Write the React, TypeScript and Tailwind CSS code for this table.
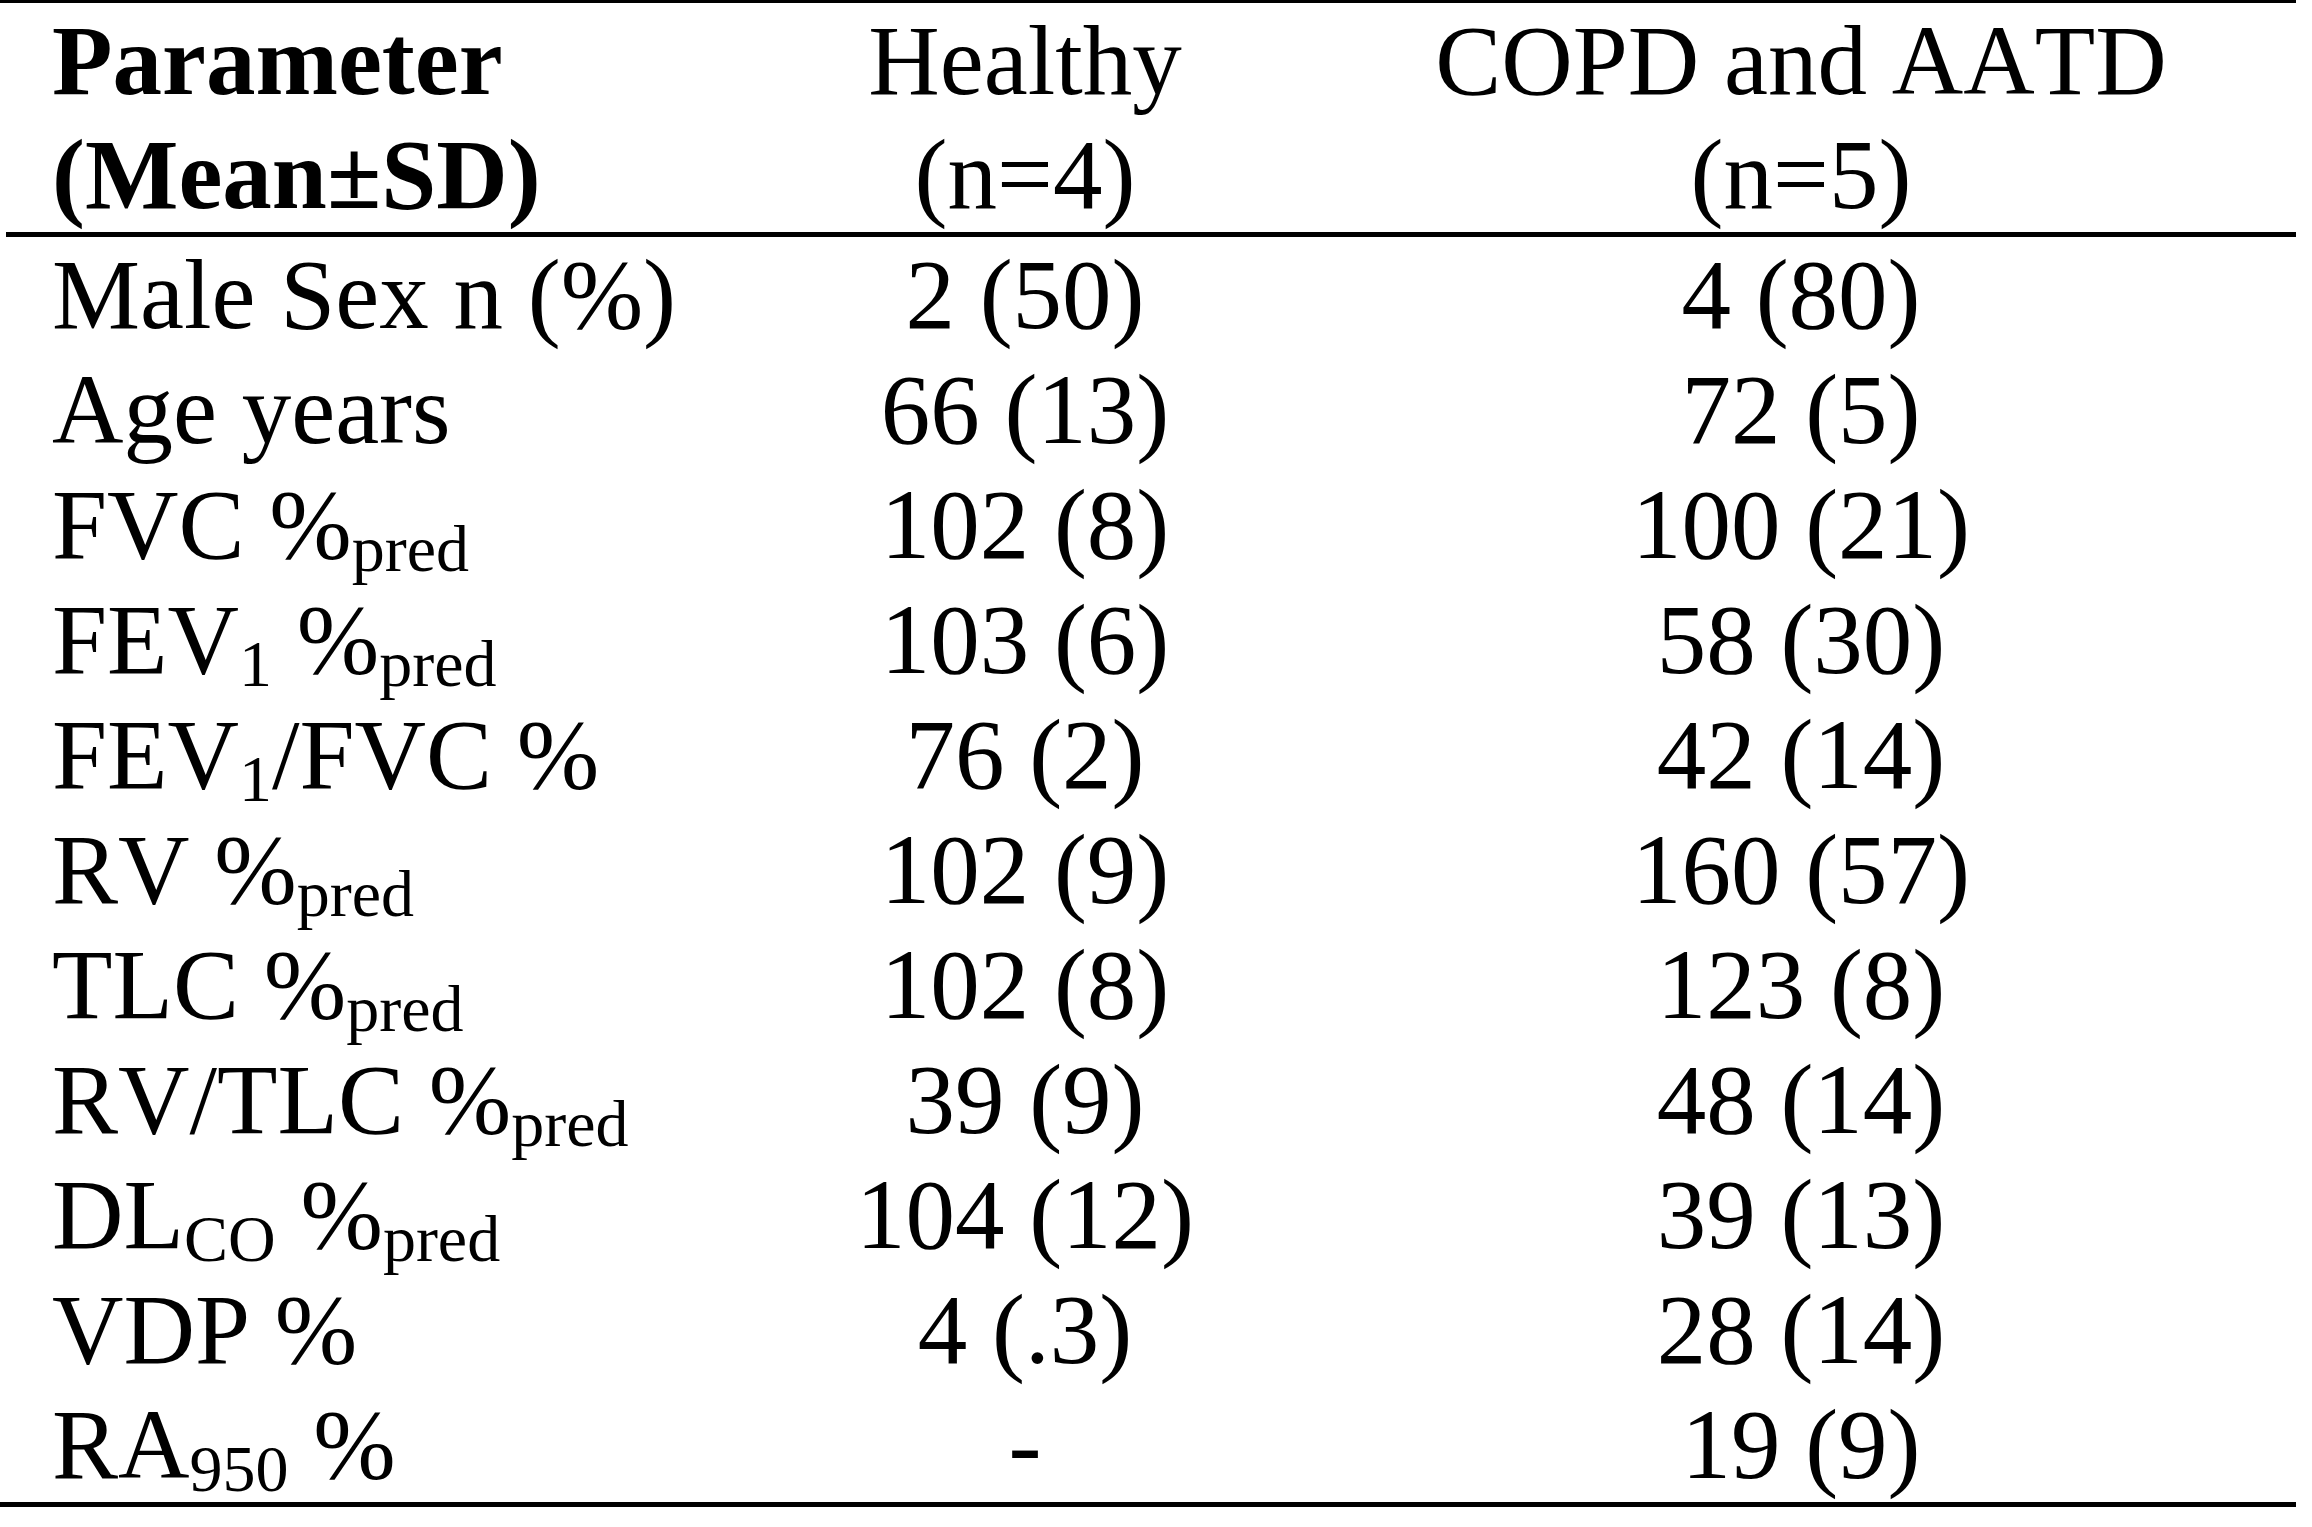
import type { ReactNode } from "react";

function Sub({ children }: { children: ReactNode }) {
  return <span className="align-[-13px] text-[66px] leading-none">{children}</span>;
}

const rows: { label: ReactNode; healthy: string; copd: string }[] = [
  { label: "Male Sex n (%)", healthy: "2 (50)", copd: "4 (80)" },
  { label: "Age years", healthy: "66 (13)", copd: "72 (5)" },
  { label: <>FVC %<Sub>pred</Sub></>, healthy: "102 (8)", copd: "100 (21)" },
  { label: <>FEV<Sub>1</Sub> %<Sub>pred</Sub></>, healthy: "103 (6)", copd: "58 (30)" },
  { label: <>FEV<Sub>1</Sub>/FVC %</>, healthy: "76 (2)", copd: "42 (14)" },
  { label: <>RV %<Sub>pred</Sub></>, healthy: "102 (9)", copd: "160 (57)" },
  { label: <>TLC %<Sub>pred</Sub></>, healthy: "102 (8)", copd: "123 (8)" },
  { label: <>RV/TLC %<Sub>pred</Sub></>, healthy: "39 (9)", copd: "48 (14)" },
  { label: <>DL<Sub>CO</Sub> %<Sub>pred</Sub></>, healthy: "104 (12)", copd: "39 (13)" },
  { label: "VDP %", healthy: "4 (.3)", copd: "28 (14)" },
  { label: <>RA<Sub>950</Sub> %</>, healthy: "-", copd: "19 (9)" },
];

export default function App() {
  return (
    <div className="min-h-screen bg-white font-['Liberation_Serif','Times_New_Roman',serif] text-[99px] text-black [font-kerning:none]">
      <div className="w-[2296px] border-t-[3px] border-black">
        {/* Header */}
        <div className="ml-[6px] grid grid-cols-[690px_658px_894px] border-b-[5px] border-black pt-[1px] leading-[114px]">
          <div className="pl-[46px] font-bold whitespace-nowrap">
            Parameter
            <br />
            (Mean±SD)
          </div>
          <div className="text-center whitespace-nowrap">
            Healthy
            <br />
            (n=4)
          </div>
          <div className="text-center whitespace-nowrap">
            COPD and AATD
            <br />
            (n=5)
          </div>
        </div>

        {/* Body */}
        <div className="border-b-[5px] border-black">
          {rows.map((row, idx) => (
            <div key={idx} className="grid h-[115px] grid-cols-[696px_658px_894px] leading-[115px]">
              <div className="pl-[52px] whitespace-nowrap">{row.label}</div>
              <div className="text-center whitespace-nowrap">{row.healthy}</div>
              <div className="text-center whitespace-nowrap">{row.copd}</div>
            </div>
          ))}
        </div>
      </div>
    </div>
  );
}
